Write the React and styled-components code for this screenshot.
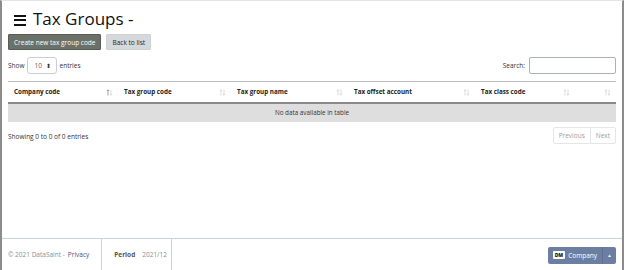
import React from "react"
import styled, { createGlobalStyle } from "styled-components"

const Global = createGlobalStyle`
  html, body { margin: 0; padding: 0; background: #fff; }
  body { font-family: 'Open Sans', 'Noto Sans', sans-serif; color: #212529; }
  * { box-sizing: border-box; }
`;

const Frame = styled.div`
  width: 624px;
  height: 270px;
  display: flex;
  flex-direction: column;
  border-top: 1px solid #e4e4e4;
  border-left: 2px solid #8c8c8c;
  border-right: 2px solid #8c8c8c;
  overflow: hidden;
`;

const Main = styled.div`
  flex: 1;
  padding: 5px 6px 0 6px;
`;

const Title = styled.h1`
  margin: 0;
  display: flex;
  align-items: center;
  gap: 7px;
  font-size: 17px;
  font-weight: 400;
  line-height: 26px;
  padding-left: 6px;
  color: #111;
`;

const Burger = styled.span`
  display: flex;
  flex-direction: column;
  gap: 2.5px;
  margin-top: 2px;
  span {
    display: block;
    width: 12px;
    height: 2px;
    background: #111;
  }
`;

const Buttons = styled.div`
  display: flex;
  gap: 5px;
  margin-top: 2px;
`;

const Btn = styled.button`
  font-family: inherit;
  font-size: 6.5px;
  height: 16px;
  padding: 0 5px;
  border-radius: 1px;
  border: 1px solid ${p => (p.dark ? "#575c56" : "#cfd2d5")};
  background: ${p => (p.dark ? "#6b7169" : "#d6d9dc")};
  color: ${p => (p.dark ? "#fff" : "#212529")};
`;

const Controls = styled.div`
  display: flex;
  justify-content: space-between;
  align-items: center;
  margin-top: 7px;
  font-size: 6.5px;
  color: #333;
`;

const Length = styled.label`
  display: flex;
  align-items: center;
  gap: 3px;
`;

const Select = styled.span`
  display: inline-flex;
  align-items: center;
  justify-content: space-between;
  width: 30px;
  height: 17px;
  margin-left: -1px;
  padding: 0 5px 0 7px;
  border: 1px solid #c9ced3;
  border-radius: 3px;
  color: #666;
  font-size: 6.5px;
`;

const Caret = styled.span`
  font-size: 6px;
  color: #333;
  line-height: 1;
`;

const SearchBox = styled.label`
  display: flex;
  align-items: center;
  gap: 4px;
`;

const Input = styled.span`
  display: block;
  width: 87px;
  height: 17px;
  border: 1px solid #a9b2bc;
  border-radius: 2px;
`;

const Table = styled.table`
  width: 100%;
  border-collapse: collapse;
  margin-top: 7px;
  font-size: 6.3px;
`;

const Th = styled.th`
  text-align: left;
  font-weight: 700;
  color: #222;
  height: 21px;
  padding: 0 6px;
  border-top: 1px solid #bdbdbd;
  border-bottom: 2px solid #8a8a8a;
  width: ${p => p.w}px;
  position: relative;
`;

const SortIcon = styled.svg`
  position: absolute;
  right: 5px;
  top: 7px;
  width: 7px;
  height: 7px;
`;

const Empty = styled.td`
  background: #dedede;
  text-align: center;
  height: 19px;
  color: #333;
  font-size: 6.3px;
`;

const Bottom = styled.div`
  display: flex;
  justify-content: space-between;
  align-items: center;
  margin-top: 5px;
  font-size: 6.5px;
  color: #333;
  > span { margin-top: 3px; }
`;

const Pager = styled.div`
  display: flex;
`;

const PageBtn = styled.span`
  display: block;
  height: 17px;
  line-height: 15px;
  padding: 0 5px;
  border: 1px solid #e3e6e9;
  margin-left: ${p => (p.last ? "-1px" : "0")};
  color: #9aa0a6;
  font-size: 6.5px;
  border-radius: ${p => (p.last ? "0 2px 2px 0" : "2px 0 0 2px")};
`;

const Footer = styled.footer`
  height: 32px;
  border-top: 1px solid #c9d2e3;
  display: flex;
  align-items: stretch;
  font-size: 6.5px;
  color: #8a8f95;
`;

const FootCell = styled.div`
  display: flex;
  align-items: center;
  gap: 3px;
  padding: 0 ${p => p.pr}px 0 ${p => p.pl}px;
  border-right: 1px solid #c9d2e3;
  b { color: #555; font-weight: 700; margin-right: 4px; }
`;

const PrivacyLink = styled.a`
  color: #3b4f86;
  text-decoration: none;
`;

const Spacer = styled.div`
  flex: 1;
`;

const CompanyBtn = styled.div`
  align-self: center;
  display: flex;
  height: 17px;
  margin-right: 6px;
  margin-top: 1px;
  border-radius: 2px;
  background: #6c7fa3;
  color: #fff;
  overflow: hidden;
`;

const CompanyMain = styled.span`
  display: flex;
  align-items: center;
  gap: 3px;
  padding: 0 5px;
  font-size: 6.5px;
`;

const Badge = styled.span`
  background: #fff;
  color: #222;
  font-weight: 800;
  font-size: 5px;
  padding: 1px 2px;
  border-radius: 1px;
  line-height: 6px;
`;

const Toggle = styled.span`
  display: flex;
  align-items: center;
  justify-content: center;
  width: 14px;
  border-left: 1px solid #5d6f92;
  font-size: 4.5px;
`;

const cols = [
  { label: "Company code", w: 110, active: true },
  { label: "Tax group code", w: 113 },
  { label: "Tax group name", w: 117 },
  { label: "Tax offset account", w: 127 },
  { label: "Tax class code", w: 100 },
  { label: "", w: 41 },
]

const Sort = ({ active }) => (
  <SortIcon viewBox="0 0 7 7" fill="none" strokeWidth="0.8">
    <g stroke={active ? "#8c8c8c" : "#d2d2d2"}>
      <path d="M2 6.5V0.8M0.8 2L2 0.8L3.2 2" />
    </g>
    <g stroke="#d2d2d2">
      <path d="M5 0.5V6.2M3.8 5L5 6.2L6.2 5" />
    </g>
  </SortIcon>
)

const App = () => {
  return (
    <>
      <Global />
      <Frame>
        <Main>
          <Title>
            <Burger><span /><span /><span /></Burger>
            Tax Groups -
          </Title>
          <Buttons>
            <Btn dark>Create new tax group code</Btn>
            <Btn>Back to list</Btn>
          </Buttons>
          <Controls>
            <Length>
              Show
              <Select>10 <Caret>⬍</Caret></Select>
              entries
            </Length>
            <SearchBox>
              Search:
              <Input />
            </SearchBox>
          </Controls>
          <Table>
            <thead>
              <tr>
                {cols.map(c => (
                  <Th key={c.label} w={c.w}>
                    {c.label}
                    <Sort active={c.active} />
                  </Th>
                ))}
              </tr>
            </thead>
            <tbody>
              <tr>
                <Empty colSpan={6}>No data available in table</Empty>
              </tr>
            </tbody>
          </Table>
          <Bottom>
            <span>Showing 0 to 0 of 0 entries</span>
            <Pager>
              <PageBtn>Previous</PageBtn>
              <PageBtn last>Next</PageBtn>
            </Pager>
          </Bottom>
        </Main>
        <Footer>
          <FootCell pl={6} pr={12}>
            © 2021 DataSaint - <PrivacyLink href="#">Privacy</PrivacyLink>
          </FootCell>
          <FootCell pl={12} pr={4}>
            <b>Period</b> 2021/12
          </FootCell>
          <Spacer />
          <CompanyBtn>
            <CompanyMain><Badge>DM</Badge>Company</CompanyMain>
            <Toggle>▲</Toggle>
          </CompanyBtn>
        </Footer>
      </Frame>
    </>
  )
}

export default App
